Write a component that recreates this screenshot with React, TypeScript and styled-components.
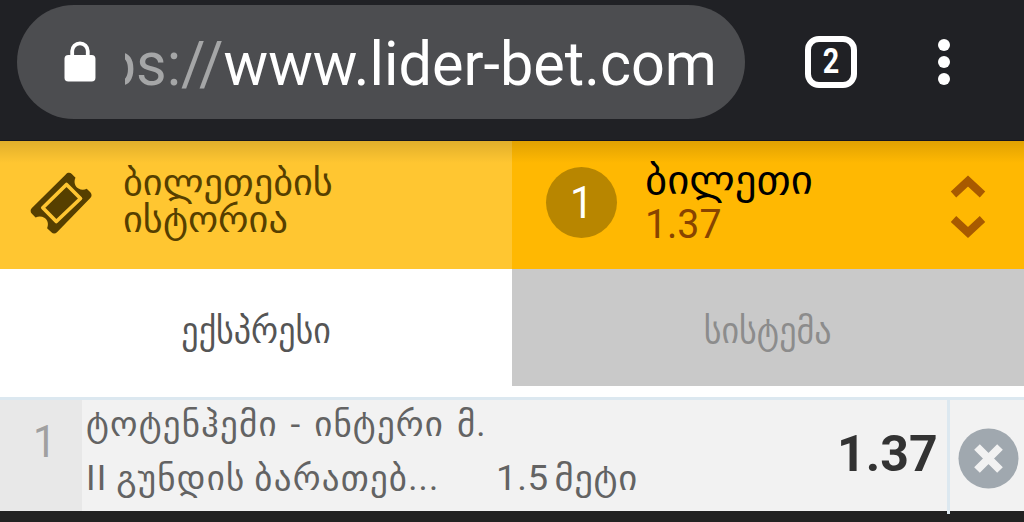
import React from 'react';
import styled, { createGlobalStyle } from 'styled-components';

const GlobalStyle = createGlobalStyle`
  * {
    box-sizing: border-box;
  }

  body {
    margin: 0;
    background: #222222;
    font-family: Roboto, 'DejaVu Sans', sans-serif;
    overflow: hidden;
  }
`;

const Screen = styled.div`
  width: 1024px;
  height: 522px;
  overflow: hidden;
  display: flex;
  flex-direction: column;
  background: #222222;
`;

const Line = styled.div<{
  $size: number;
  $height: number;
  $color: string;
  $stretch?: number;
  $weight?: number;
  $origin?: string;
  $tracking?: number;
  $wordGap?: number;
}>`
  width: max-content;
  font-size: ${(p) => p.$size}px;
  line-height: ${(p) => p.$height}px;
  color: ${(p) => p.$color};
  font-weight: ${(p) => p.$weight ?? 400};
  letter-spacing: ${(p) => p.$tracking ?? 0}px;
  word-spacing: ${(p) => p.$wordGap ?? 0}px;
  white-space: pre;
  transform: scaleX(${(p) => p.$stretch ?? 1});
  transform-origin: ${(p) => p.$origin ?? 'left'} center;
`;

const BrowserBar = styled.header`
  flex: none;
  display: flex;
  align-items: flex-start;
  height: 141px;
  padding: 5px 0 0 17px;
  background: #202125;
  border-bottom: 1px solid #15161f;
`;

const AddressPill = styled.div`
  display: flex;
  align-items: center;
  width: 728px;
  height: 114px;
  padding: 0 28px 0 47px;
  border-radius: 57px;
  background: #4c4d50;
`;

const UrlClip = styled.div`
  display: flex;
  justify-content: flex-end;
  width: 593px;
  margin-left: 29px;
  padding-top: 3px;
  overflow: hidden;
`;

const Scheme = styled.span`
  color: #a5a6a7;
`;

const TabCount = styled.div`
  display: flex;
  align-items: center;
  justify-content: center;
  width: 52px;
  height: 52px;
  margin: 31px 0 0 60px;
  border: 6px solid #ffffff;
  border-radius: 14px;
`;

const MenuDots = styled.div`
  display: flex;
  flex-direction: column;
  gap: 5px;
  margin: 34px 0 0 81px;
`;

const Dot = styled.span`
  width: 12px;
  height: 12px;
  border-radius: 50%;
  background: #ffffff;
`;

const TicketBar = styled.nav`
  flex: none;
  display: grid;
  grid-template-columns: 1fr 1fr;
  height: 128px;
`;

const barShade = 'linear-gradient(rgba(0, 0, 0, 0.12), rgba(0, 0, 0, 0) 22px)';

const History = styled.div`
  display: flex;
  align-items: flex-start;
  padding: 31px 0 0 30px;
  background: ${barShade}, #ffc631;
`;

const HistoryLabel = styled.div`
  padding: 0 0 0 30px;
  margin-top: -7px;
`;

const Current = styled.div`
  display: flex;
  align-items: flex-start;
  padding: 26px 0 0 34px;
  background: ${barShade}, #ffb802;
`;

const Badge = styled.div`
  display: flex;
  justify-content: center;
  width: 71px;
  height: 71px;
  border-radius: 50%;
  background: #b88600;
`;

const CurrentLabel = styled.div`
  width: 304px;
  margin: -10px 0 0 28px;
`;

const Tabs = styled.div`
  flex: none;
  display: flex;
  align-items: flex-start;
  height: 128px;
  background: #ffffff;
`;

const Tab = styled.div<{ $active?: boolean }>`
  display: flex;
  justify-content: center;
  width: 512px;
  height: 117px;
  padding-top: 38px;
  background: ${(p) => (p.$active ? '#ffffff' : '#c9c9c9')};
`;

const BetRow = styled.div`
  flex: none;
  display: flex;
  height: 117px;
  border-top: 3px solid #dce8f0;
`;

const BetIndex = styled.div`
  width: 82px;
  height: 111px;
  padding: 17px 0 0 33px;
  background: #e8e8e8;
`;

const BetInfo = styled.div`
  width: 865px;
  height: 111px;
  display: flex;
  justify-content: space-between;
  padding-left: 4px;
  background: #f2f2f2;
`;

const BetText = styled.div`
  width: 560px;
`;

const Market = styled.div`
  display: flex;
`;

const MarketName = styled.div`
  width: 410px;
`;

const Outcome = styled.div`
  width: 142px;
  overflow: hidden;
`;

const Odds = styled.div`
  width: 110px;
  padding-top: 24px;
`;

const Separator = styled.div`
  width: 3px;
  height: 114px;
  background: #dce8f0;
`;

const RemoveCell = styled.div`
  flex: 1;
  height: 111px;
  padding: 28px 0 0 8px;
  background: #f2f2f2;
`;

const LockIcon = () => (
  <svg width="32" height="42" viewBox="0 0.5 32 42">
    <path d="M8.2 16V10.6a7.8 7.8 0 0 1 15.6 0V16" fill="none" stroke="#fff" strokeWidth="3.8" />
    <rect x="0.5" y="14.5" width="31" height="26.5" rx="3.8" fill="#fff" />
  </svg>
);

const TicketIcon = () => (
  <svg width="63" height="63" viewBox="-0.5 0 63 63">
    <path
      d="M35.5 2.2c1.6-1.8 4.2-1.8 5.8-.2L45 5.7c-2.1 4.2-.4 9 3 10.8 2.8 1.6 5.8 1.5 8.2.2l3.6 3.6c1.7 1.7 1.7 4.1 0 5.8L26.5 60.3c-1.7 1.6-4 1.6-5.6 0l-4.3-4c1.9-4.4.4-8.6-2.8-10.5-2.6-1.6-5.8-1.6-8.7-.3l-3.7-3.7c-1.7-1.7-1.7-4.2 0-5.8z"
      fill="#563f00"
    />
    <path d="M36 12.5 50 26.5 25.8 49.5 12.3 35.8z" fill="none" stroke="#ffc631" strokeWidth="3.7" strokeLinejoin="round" />
  </svg>
);

const SortIcon = () => (
  <svg width="38" height="76" viewBox="0 0 38 76">
    <path d="M4.5 27.5 19 14 33.5 27.5" fill="none" stroke="#a85a00" strokeWidth="8" />
    <path d="M4.5 52 19 65.5 33.5 52" fill="none" stroke="#a85a00" strokeWidth="8" />
  </svg>
);

const RemoveIcon = () => (
  <svg width="61" height="61" viewBox="0 0 61 61">
    <circle cx="30.5" cy="30.5" r="30" fill="#a0a8af" />
    <path d="M19 19 42 42M42 19 19 42" stroke="#f2f2f2" strokeWidth="8" />
  </svg>
);

const App: React.FC = () => {
  return (
    <Screen>
      <GlobalStyle />
      <BrowserBar>
        <AddressPill>
          <LockIcon />
          <UrlClip>
            <Line $size={62} $height={74} $color="#ffffff" $stretch={0.958} $origin="right">
              <Scheme>https://</Scheme>www.lider-bet.com
            </Line>
          </UrlClip>
        </AddressPill>
        <TabCount>
          <Line $size={35} $height={40} $color="#ffffff" $weight={700} $stretch={0.82} $origin="center">
            2
          </Line>
        </TabCount>
        <MenuDots>
          <Dot />
          <Dot />
          <Dot />
        </MenuDots>
      </BrowserBar>

      <TicketBar>
        <History>
          <TicketIcon />
          <HistoryLabel>
            <Line $size={36} $height={37} $color="#563f00" $stretch={1.065}>ბილეთების</Line>
            <Line $size={36} $height={37} $color="#563f00" $stretch={1.065}>ისტორია</Line>
          </HistoryLabel>
        </History>
        <Current>
          <Badge>
            <Line $size={45} $height={71} $color="#ffffff" $stretch={0.92} $origin="center">1</Line>
          </Badge>
          <CurrentLabel>
            <Line $size={40} $height={48} $color="#000000" $stretch={1.07}>ბილეთი</Line>
            <Line $size={40} $height={40} $color="#884400" $stretch={0.98}>1.37</Line>
          </CurrentLabel>
          <SortIcon />
        </Current>
      </TicketBar>

      <Tabs>
        <Tab $active>
          <Line $size={36} $height={48} $color="#555555" $stretch={0.945} $origin="center">ექსპრესი</Line>
        </Tab>
        <Tab>
          <Line $size={36} $height={48} $color="#8c8c8c" $stretch={0.945} $origin="center">სისტემა</Line>
        </Tab>
      </Tabs>

      <BetRow>
        <BetIndex>
          <Line $size={45} $height={50} $color="#a0a0a0" $stretch={0.92}>1</Line>
        </BetIndex>
        <BetInfo>
          <BetText>
            <Line $size={35} $height={50} $color="#636363" $tracking={1.15} $wordGap={3}>ტოტენჰემი - ინტერი მ.</Line>
            <Market>
              <MarketName>
                <Line $size={35} $height={58} $color="#636363" $tracking={1.2} $wordGap={-1}>II გუნდის ბარათებ...</Line>
              </MarketName>
              <Outcome>
                <Line $size={35} $height={58} $color="#636363" $tracking={0.6} $wordGap={-4} $stretch={1.05}>1.5 მეტი</Line>
              </Outcome>
            </Market>
          </BetText>
          <Odds>
            <Line $size={50} $height={60} $color="#333333" $weight={700}>1.37</Line>
          </Odds>
        </BetInfo>
        <Separator />
        <RemoveCell>
          <RemoveIcon />
        </RemoveCell>
      </BetRow>
    </Screen>
  );
};

export default App;
